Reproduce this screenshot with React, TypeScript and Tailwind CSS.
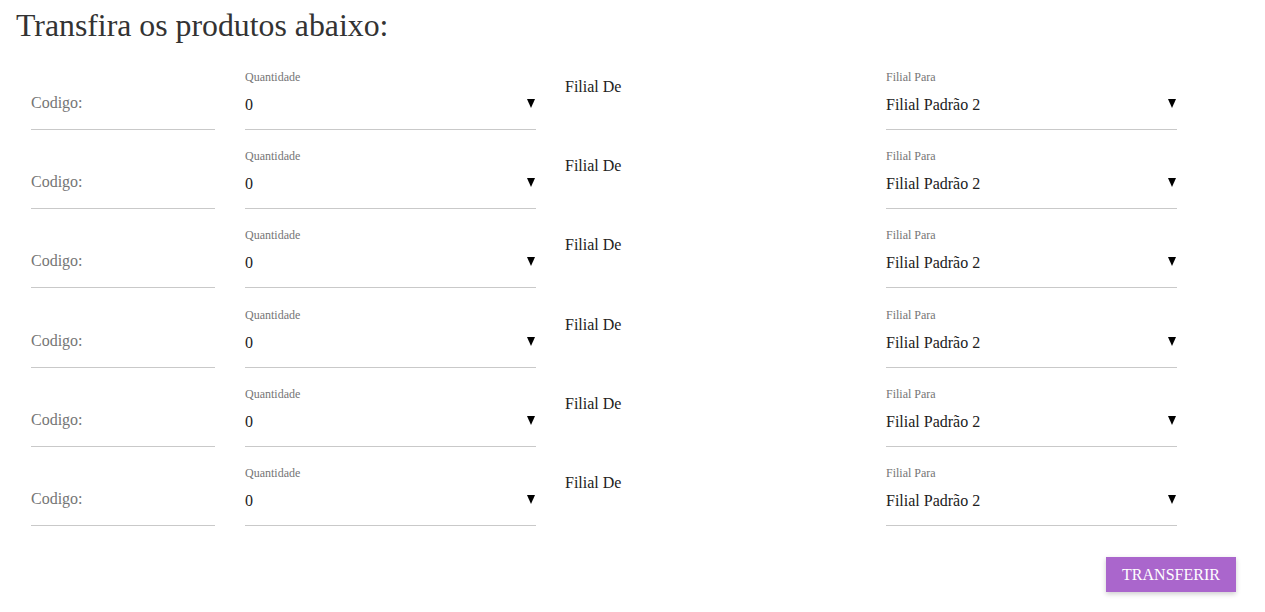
import React from "react";

const serif = { fontFamily: '"Liberation Serif", "Times New Roman", serif' };

function Caret() {
  return (
    <span className="block w-0 h-0 mr-[1px] mt-[-3px] border-l-[4px] border-r-[4px] border-t-[9px] border-l-transparent border-r-transparent border-t-black" />
  );
}

function Row() {
  return (
    <div className="flex h-[79.2px] pl-[31px]">
      <div className="w-[184px] h-[79px] flex flex-col border-b border-[#c9c9c9]">
        <div className="mt-[42px] h-[20px] leading-[20px] text-[16px] text-[#757575]">Codigo:</div>
      </div>
      <div className="ml-[30px] w-[291px] h-[79px] flex flex-col border-b border-[#c9c9c9]">
        <div className="mt-[19px] h-[14px] leading-[14px] text-[12px] text-[#757575]">Quantidade</div>
        <div className="mt-[11px] h-[20px] leading-[20px] text-[16px] text-[#212121] flex justify-between items-center">
          <span>0</span>
          <Caret />
        </div>
      </div>
      <div className="ml-[29px] w-[291px] h-[79px]">
        <div className="mt-[26px] h-[20px] leading-[20px] text-[16px] text-[#222]">Filial De</div>
      </div>
      <div className="ml-[30px] w-[291px] h-[79px] flex flex-col border-b border-[#c9c9c9]">
        <div className="mt-[19px] h-[14px] leading-[14px] text-[12px] text-[#757575]">Filial Para</div>
        <div className="mt-[11px] h-[20px] leading-[20px] text-[16px] text-[#212121] flex justify-between items-center">
          <span>Filial Padrão 2</span>
          <Caret />
        </div>
      </div>
    </div>
  );
}

export default function App() {
  return (
    <div className="w-[1265px] h-[612px] bg-white overflow-hidden" style={serif}>
      <div className="h-[51px] pl-[16px] pt-[6px]">
        <h1 className="text-[31.8px] leading-[40px] text-[#333]">Transfira os produtos abaixo:</h1>
      </div>
      {[0, 1, 2, 3, 4, 5].map((i) => (
        <Row key={i} />
      ))}
      <div className="flex justify-end pr-[29px] mt-[31px]">
        <button className="w-[130px] h-[35px] bg-[#aa66cc] text-white text-[16px] shadow-[0_2px_5px_rgba(0,0,0,0.2)]">
          TRANSFERIR
        </button>
      </div>
    </div>
  );
}
